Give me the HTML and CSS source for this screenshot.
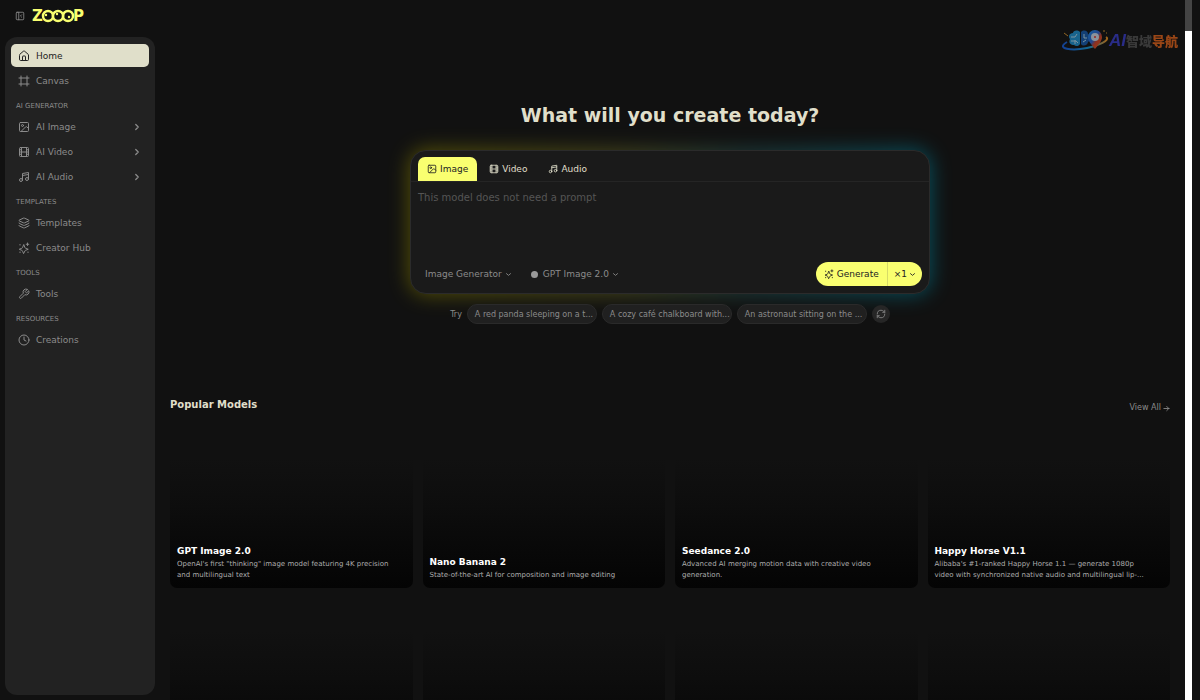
FILE: index.html
```html
<!DOCTYPE html>
<html lang="en">
<head>
    <meta charset="UTF-8">
    <meta name="viewport" content="width=device-width, initial-scale=1.0">
    <title>Zooop - What will you create today?</title>
    <link rel="stylesheet" href="styles.css">
</head>
<body>
    <!-- Shared icons -->
    <svg class="sprite" aria-hidden="true">
        <symbol id="i-panel" viewBox="0 0 24 24"><rect x="3" y="3" width="18" height="18" rx="2"/><path d="M9 3v18M16 15l-3-3 3-3"/></symbol>
        <symbol id="i-home" viewBox="0 0 24 24"><path d="M15 21v-8a1 1 0 0 0-1-1h-4a1 1 0 0 0-1 1v8"/><path d="M3 10a2 2 0 0 1 .7-1.5l7-6a2 2 0 0 1 2.6 0l7 6A2 2 0 0 1 21 10v9a2 2 0 0 1-2 2H5a2 2 0 0 1-2-2z"/></symbol>
        <symbol id="i-frame" viewBox="0 0 24 24"><path d="M22 6H2M22 18H2M6 2v20M18 2v20"/></symbol>
        <symbol id="i-image" viewBox="0 0 24 24"><rect x="3" y="3" width="18" height="18" rx="2"/><circle cx="9" cy="9" r="2"/><path d="M21 15l-3.1-3.1a2 2 0 0 0-2.8 0L6 21"/></symbol>
        <symbol id="i-film" viewBox="0 0 24 24"><rect x="3" y="3" width="18" height="18" rx="2"/><path d="M7 3v18M17 3v18M3 7.5h4M3 12h18M3 16.5h4M17 7.5h4M17 16.5h4"/></symbol>
        <symbol id="i-music" viewBox="0 0 24 24"><path d="M9 18V5l12-2v13M9 9l12-2"/><circle cx="6" cy="18" r="3"/><circle cx="18" cy="16" r="3"/></symbol>
        <symbol id="i-layers" viewBox="0 0 24 24"><path d="M12.8 2.2a2 2 0 0 0-1.7 0L2.6 6.1a1 1 0 0 0 0 1.8l8.6 3.9a2 2 0 0 0 1.7 0l8.600-3.900a1 1 0 0 0 0-1.800z"/><path d="M2 12a1 1 0 0 0 .6.9l8.6 3.900a2 2 0 0 0 1.7 0l8.6-3.900A1 1 0 0 0 22 12M2 17a1 1 0 0 0 .6.900l8.600 3.900a2 2 0 0 0 1.700 0l8.600-3.900A1 1 0 0 0 22 17"/></symbol>
        <symbol id="i-sparkles" viewBox="0 0 24 24"><path d="M9 18a2 2 0 0 0-1.300-1.300L2.500 14.500l5.200-2A2 2 0 0 0 9 11.200L11.500 5l2.300 6.200a2 2 0 0 0 1.300 1.300l5.400 2-5.400 2.200A2 2 0 0 0 13.800 18l-2.300 4.500z"/><path d="M19 2v5M16.500 4.500h5M4 5v1M4 20v1M20 20v1"/></symbol>
        <symbol id="i-wrench" viewBox="0 0 24 24"><path d="M14.7 6.3a1 1 0 0 0 0 1.4l1.600 1.600a1 1 0 0 0 1.400 0l3.800-3.800a6 6 0 0 1-7.900 7.900l-6.900 6.900a2.100 2.100 0 0 1-3-3l6.900-6.900a6 6 0 0 1 7.900-7.900z"/></symbol>
        <symbol id="i-clock" viewBox="0 0 24 24"><circle cx="12" cy="12" r="10"/><path d="M12 6v6l4 2"/></symbol>
        <symbol id="i-right" viewBox="0 0 24 24"><path d="M9 18l6-6-6-6"/></symbol>
        <symbol id="i-down" viewBox="0 0 24 24"><path d="M5 9l7 6 7-6"/></symbol>
        <symbol id="i-refresh" viewBox="0 0 24 24"><path d="M3 12a9 9 0 0 1 9-9 9.700 9.700 0 0 1 6.700 2.700L21 8M21 3v5h-5M21 12a9 9 0 0 1-9 9 9.700 9.700 0 0 1-6.700-2.700L3 16M8 16H3v5"/></symbol>
        <symbol id="i-arrow" viewBox="0 0 24 24"><path d="M3 12h18M13 5l7 7-7 7"/></symbol>
    </svg>

    <div class="app">
        <aside class="side">
            <header class="brand">
                <button type="button" class="collapse" aria-label="Collapse sidebar"><svg class="icon small"><use href="#i-panel"/></svg></button>
                <a href="#" class="logo" aria-label="Zooop">
                    <svg viewBox="0 0 51 18">
                        <text x="0" y="14" class="logo-letter">Z</text>
                        <text x="41" y="14" class="logo-letter">P</text>
                        <g class="eyes">
                            <circle cx="16" cy="9" r="5"/><circle cx="36" cy="9" r="5"/><circle cx="26" cy="9" r="5"/>
                        </g>
                        <g class="pupils">
                            <circle cx="14" cy="8" r="1.2"/><circle cx="25" cy="7" r="1.2"/><circle cx="37" cy="10" r="1.2"/>
                        </g>
                    </svg>
                </a>
            </header>
            <nav class="menu">
                <a href="#" class="item active"><svg class="icon"><use href="#i-home"/></svg>Home</a>
                <a href="#" class="item"><svg class="icon"><use href="#i-frame"/></svg>Canvas</a>
                <h2 class="group">AI GENERATOR</h2>
                <a href="#" class="item"><svg class="icon"><use href="#i-image"/></svg>AI Image<svg class="icon small more"><use href="#i-right"/></svg></a>
                <a href="#" class="item"><svg class="icon"><use href="#i-film"/></svg>AI Video<svg class="icon small more"><use href="#i-right"/></svg></a>
                <a href="#" class="item"><svg class="icon"><use href="#i-music"/></svg>AI Audio<svg class="icon small more"><use href="#i-right"/></svg></a>
                <h2 class="group">TEMPLATES</h2>
                <a href="#" class="item"><svg class="icon"><use href="#i-layers"/></svg>Templates</a>
                <a href="#" class="item"><svg class="icon"><use href="#i-sparkles"/></svg>Creator Hub</a>
                <h2 class="group">TOOLS</h2>
                <a href="#" class="item"><svg class="icon"><use href="#i-wrench"/></svg>Tools</a>
                <h2 class="group">RESOURCES</h2>
                <a href="#" class="item"><svg class="icon"><use href="#i-clock"/></svg>Creations</a>
            </nav>
        </aside>

        <main class="main">
            <div class="watermark">
                <svg class="watermark-art" viewBox="0 0 48 24">
                    <defs>
                        <linearGradient id="pin" x1="0" y1="0" x2="1" y2="1"><stop offset="0" stop-color="#1996ff"/><stop offset=".45" stop-color="#2f6be0"/><stop offset=".6" stop-color="#e0452a"/><stop offset="1" stop-color="#ff6b1a"/></linearGradient>
                        <linearGradient id="ring" x1="0" x2="1"><stop offset="0" stop-color="#1560e8"/><stop offset=".6" stop-color="#16a5e8"/><stop offset="1" stop-color="#ff9d1f"/></linearGradient>
                    </defs>
                    <path d="M19 3c-3-3-7-1-7 1-4 0-5 4-3 6-2 4 1 6 4 6 2 2 5 1 6-1z" fill="#1e9be0"/>
                    <path d="M20 3c3-3 7-1 7 2 3 2 3 6 0 8 0 3-5 5-7 2z" fill="#155fb8"/>
                    <path d="M10 8h4l2-3M10 12h5l2 2M14 15v-4M23 5v4h3M22 13l3-2" fill="none" stroke="#bfeaff"/>
                    <path d="M6 13c-12 7 5 9 20 6 11-2 24-8 19-11" fill="none" stroke="url(#ring)" stroke-width="2"/>
                    <path d="M34 20c-4-5-7-8-7-12a7 7 0 0 1 14 0c0 4-3 7-7 12z" fill="url(#pin)"/>
                    <circle cx="34" cy="8" r="4" fill="#dce9f5"/><circle cx="34" cy="8" r="1" fill="#e33"/>
                    <path d="M3 4l4 3M42 2h2M45 4h1" stroke="#e8a030"/>
                </svg>
                <span class="watermark-text"><b class="wm-ai">AI</b><b class="wm-grey">智域</b><b class="wm-orange">导航</b></span>
            </div>

            <section class="hero">
                <h1>What will you create today?</h1>
                <form class="composer">
                    <div class="tabs">
                        <button type="button" class="tab selected"><svg class="icon small"><use href="#i-image"/></svg>Image</button>
                        <button type="button" class="tab"><svg class="icon small"><use href="#i-film"/></svg>Video</button>
                        <button type="button" class="tab"><svg class="icon small"><use href="#i-music"/></svg>Audio</button>
                    </div>
                    <textarea class="prompt" aria-label="Prompt" placeholder="This model does not need a prompt"></textarea>
                    <div class="toolbar">
                        <button type="button" class="picker">Image Generator<svg class="icon tiny"><use href="#i-down"/></svg></button>
                        <button type="button" class="picker"><span class="model-dot"></span>GPT Image 2.0<svg class="icon tiny"><use href="#i-down"/></svg></button>
                        <div class="generate">
                            <button type="submit" class="go"><svg class="icon small"><use href="#i-sparkles"/></svg>Generate</button>
                            <button type="button" class="count">×1<svg class="icon tiny"><use href="#i-down"/></svg></button>
                        </div>
                    </div>
                </form>
                <div class="try">
                    <span>Try</span>
                    <button type="button" class="chip">A red panda sleeping on a t...</button>
                    <button type="button" class="chip">A cozy café chalkboard with...</button>
                    <button type="button" class="chip">An astronaut sitting on the ...</button>
                    <button type="button" class="refresh" aria-label="Refresh ideas"><svg class="icon small"><use href="#i-refresh"/></svg></button>
                </div>
            </section>

            <section class="models">
                <div class="models-head">
                    <h2>Popular Models</h2>
                    <a href="#">View All<svg class="icon tiny"><use href="#i-arrow"/></svg></a>
                </div>
                <div class="grid">
                    <a href="#" class="card"><h3>GPT Image 2.0</h3><p>OpenAI's first "thinking" image model featuring 4K precision<br>and multilingual text</p></a>
                    <a href="#" class="card"><h3>Nano Banana 2</h3><p>State-of-the-art AI for composition and image editing</p></a>
                    <a href="#" class="card"><h3>Seedance 2.0</h3><p>Advanced AI merging motion data with creative video<br>generation.</p></a>
                    <a href="#" class="card"><h3>Happy Horse V1.1</h3><p>Alibaba's #1-ranked Happy Horse 1.1 — generate 1080p<br>video with synchronized native audio and multilingual lip-...</p></a>
                    <a href="#" class="card"></a>
                    <a href="#" class="card"></a>
                    <a href="#" class="card"></a>
                    <a href="#" class="card"></a>
                </div>
            </section>
        </main>

        <div class="scroll-track"><div class="scroll-thumb"></div></div>
    </div>
</body>
</html>
```
FILE: styles.css
```css
* {
    margin: 0;
    padding: 0;
    box-sizing: border-box;
}

body {
    font-family: "DejaVu Sans", sans-serif;
    font-size: 9px;
    background: #111;
    color: #8b8b8b;
    overflow: hidden;
}

a {
    color: inherit;
    text-decoration: none;
}

button {
    font: inherit;
    color: inherit;
    background: none;
    border: none;
    cursor: pointer;
}

.sprite {
    display: none;
}

.icon {
    width: 12px;
    height: 12px;
    flex: none;
    fill: none;
    stroke: currentColor;
    stroke-width: 2;
    stroke-linecap: round;
    stroke-linejoin: round;
}

.icon.small {
    width: 10px;
    height: 10px;
}

.icon.tiny {
    width: 7px;
    height: 7px;
    stroke-width: 3;
}

.app {
    display: flex;
    height: 100vh;
    padding-right: 8px;
}

/* Sidebar */
.side {
    flex: none;
    width: 155px;
    display: flex;
    flex-direction: column;
    padding: 0 0 5px 5px;
}

.brand {
    display: flex;
    align-items: center;
    gap: 7px;
    height: 37px;
    padding: 0 0 5px 10px;
}

.collapse {
    display: flex;
}

.logo svg {
    display: block;
    width: 51px;
    height: 18px;
    overflow: visible;
}

.logo-letter {
    font-size: 15px;
    font-weight: bold;
    fill: #f9ff70;
}

.eyes {
    fill: #111;
    stroke: #f9ff70;
    stroke-width: 2.5;
}

.pupils {
    fill: #f9ff70;
}

.menu {
    flex: 1;
    display: flex;
    flex-direction: column;
    gap: 2px;
    padding: 7px 6px;
    border-radius: 12px;
    background: #222;
}

.item {
    display: flex;
    align-items: center;
    gap: 6px;
    height: 23px;
    padding: 0 7px;
    border-radius: 5px;
}

.item.active {
    background: #e0dfca;
    color: #222;
}

.more {
    margin-left: auto;
    stroke-width: 3;
}

.group {
    height: 19px;
    padding: 5px 5px 0;
    font-size: 7px;
    font-weight: normal;
    line-height: 14px;
}

/* Main column */
.main {
    position: relative;
    flex: 1;
    min-width: 0;
    padding: 0 15px;
    overflow: hidden;
}

.watermark {
    position: absolute;
    top: 29px;
    right: 7px;
    display: flex;
    align-items: center;
    opacity: 0.6;
}

.watermark-art {
    width: 48px;
    height: 24px;
}

.watermark-text {
    font: bold 13px/22px "Liberation Sans", "Noto Sans CJK SC", sans-serif;
}

.wm-ai {
    font-size: 17px;
    font-style: italic;
    color: #3a3fd8;
}

.wm-grey {
    color: #555;
}

.wm-orange {
    color: #f56a1a;
}

.hero {
    display: flex;
    flex-direction: column;
    align-items: center;
    padding-top: 102px;
}

.hero h1 {
    font-size: 19px;
    line-height: 26px;
    color: #e0dfca;
}

.composer {
    position: relative;
    width: 100%;
    max-width: 520px;
    height: 144px;
    margin-top: 22px;
    display: flex;
    flex-direction: column;
    border: 1px solid #2b2b2b;
    border-radius: 16px;
    background: #1a1a1a;
}

/* Coloured glow behind the composer */
.composer::before {
    content: "";
    position: absolute;
    inset: -2px;
    z-index: -1;
    border-radius: 18px;
    background: linear-gradient(90deg, #716a00, #5a5a20 40%, #224b4b 65%, #006b80);
    filter: blur(10px);
    opacity: 0.7;
}

.tabs {
    display: flex;
    gap: 3px;
    padding: 6px 7px 0;
    border-bottom: 1px solid #252525;
}

.tab {
    display: flex;
    align-items: center;
    gap: 3px;
    height: 24px;
    padding: 0 9px;
    border-radius: 7px 7px 0 0;
    color: #e0dfca;
}

.tab.selected {
    background: #f9ff70;
    color: #222;
}

.prompt {
    flex: 1;
    padding: 9px 7px;
    border: none;
    outline: none;
    resize: none;
    background: none;
    font: 10px/14px "DejaVu Sans", sans-serif;
    color: #e0dfca;
}

.prompt::placeholder {
    color: #555;
}

.toolbar {
    display: flex;
    align-items: center;
    gap: 5px;
    padding: 0 7px 7px;
}

.picker {
    display: flex;
    align-items: center;
    gap: 3px;
    height: 24px;
    padding: 0 7px;
}

.model-dot {
    width: 7px;
    height: 7px;
    margin-right: 2px;
    border-radius: 50%;
    background: #999;
}

.generate {
    display: flex;
    margin-left: auto;
    border-radius: 12px;
    background: #f9ff70;
    color: #222;
}

.go,
.count {
    display: flex;
    align-items: center;
    gap: 3px;
    height: 24px;
    padding: 0 8px;
}

.count {
    gap: 2px;
    padding: 0 6px;
    border-left: 1px solid #d6db68;
}

.try {
    display: flex;
    align-items: center;
    gap: 5px;
    margin-top: 10px;
    font-size: 8px;
}

.chip {
    width: 130px;
    height: 20px;
    padding: 0 2px 0 7px;
    border: 1px solid #2a2a2a;
    border-radius: 10px;
    background: #202020;
    text-align: left;
    white-space: nowrap;
}

.refresh {
    display: grid;
    place-items: center;
    width: 18px;
    height: 18px;
    border-radius: 50%;
    background: #262626;
}

/* Popular models */
.models {
    padding-top: 72px;
}

.models-head {
    display: flex;
    justify-content: space-between;
    align-items: flex-end;
    margin-bottom: 12px;
}

.models-head h2 {
    font-size: 10px;
    line-height: 18px;
    color: #e0dfca;
}

.models-head a {
    display: flex;
    align-items: center;
    gap: 2px;
    font-size: 8px;
    line-height: 12px;
}

.grid {
    display: grid;
    grid-template-columns: repeat(4, 1fr);
    gap: 10px;
}

.card {
    display: flex;
    flex-direction: column;
    justify-content: flex-end;
    aspect-ratio: 3 / 2;
    padding: 7px;
    border-radius: 7px;
    background: linear-gradient(to top, #040404, #0d0d0d 50%, #111 80%);
}

.card h3 {
    font-size: 9px;
    line-height: 14px;
    color: #fff;
}

.card p {
    margin-top: 1px;
    font-size: 7px;
    line-height: 11px;
    color: #adadad;
}

/* Page scrollbar */
.scroll-track {
    flex: none;
    width: 7px;
    background: #fff;
}

.scroll-thumb {
    height: 31px;
    background: #444;
}
```
